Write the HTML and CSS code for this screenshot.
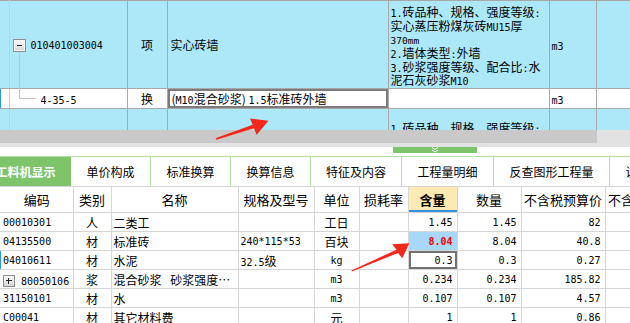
FILE: index.html
```html
<!DOCTYPE html>
<html lang="zh-CN">
<head>
    <meta charset="UTF-8">
    <title>分部分项 - 工料机显示</title>
    <link rel="stylesheet" href="styles.css">
</head>
<body>
<div class="main">
    <div class="top">
        <table class="bill">
            <colgroup>
                <col class="c-gut"><col class="c-code"><col class="c-type"><col class="c-name"><col class="c-feat"><col class="c-unit"><col class="c-last">
            </colgroup>
            <tr class="blue r1">
                <td class="gut"></td>
                <td class="code"><span class="fold"></span><span class="en">010401003004</span></td>
                <td class="mid">项</td>
                <td class="name">实心砖墙</td>
                <td class="feat">
                    <div><span class="en">1.</span>砖品种、规格、强度等级<span class="en">:</span></div>
                    <div>实心蒸压粉煤灰砖<span class="en">MU15</span>厚</div>
                    <div><span class="en sm">370mm</span></div>
                    <div><span class="en">2.</span>墙体类型<span class="en">:</span>外墙</div>
                    <div><span class="en">3.</span>砂浆强度等级、配合比<span class="en">:</span>水</div>
                    <div>泥石灰砂浆<span class="en">M10</span></div>
                </td>
                <td class="unit"><span class="en">m3</span></td>
                <td></td>
            </tr>
            <tr class="r2">
                <td class="gut mark"></td>
                <td class="code sub"><span class="en">4-35-5</span></td>
                <td class="mid">换</td>
                <td class="name edit">(<span class="en">M10</span>混合砂浆) <span class="en">1.5</span>标准砖外墙</td>
                <td></td>
                <td class="unit"><span class="en">m3</span></td>
                <td></td>
            </tr>
            <tr class="blue r3">
                <td class="gut"></td>
                <td></td>
                <td></td>
                <td></td>
                <td class="feat">
                    <div><span class="en">1.</span>砖品种、规格、强度等级<span class="en">:</span></div>
                </td>
                <td></td>
                <td></td>
            </tr>
        </table>
        <div class="tree-v"></div>
        <div class="tree-h"></div>
    </div>

    <div class="hscroll"><div class="thumb"></div></div>

    <div class="splitter">
        <div class="handle">
            <svg width="10" height="6" viewBox="0 0 10 6"><polyline points="2,0.5 5,2.5 8,0.5" fill="none" stroke="#fff" stroke-width="1"/><polyline points="2,3 5,5 8,3" fill="none" stroke="#fff" stroke-width="1"/></svg>
        </div>
    </div>

    <ul class="tabs">
        <li class="active" style="width: 90px">工料机显示</li>
        <li style="width: 80px">单价构成</li>
        <li style="width: 80px">标准换算</li>
        <li style="width: 80px">换算信息</li>
        <li style="width: 91px">特征及内容</li>
        <li style="width: 92px">工程量明细</li>
        <li style="width: 116px">反查图形工程量</li>
        <li style="width: 80px">说明信息</li>
    </ul>

    <table class="res">
        <colgroup>
            <col style="width: 73px"><col style="width: 38px"><col style="width: 127px"><col style="width: 76px"><col style="width: 45px"><col style="width: 49px"><col style="width: 49px"><col style="width: 64px"><col style="width: 84px"><col style="width: 84px">
        </colgroup>
        <tr class="head">
            <th>编码</th>
            <th>类别</th>
            <th>名称</th>
            <th>规格及型号</th>
            <th>单位</th>
            <th>损耗率</th>
            <th class="cur">含量</th>
            <th>数量</th>
            <th>不含税预算价</th>
            <th>不含税市场价</th>
        </tr>
        <tr>
            <td class="en">00010301</td>
            <td class="mid">人</td>
            <td>二类工</td>
            <td></td>
            <td class="mid">工日</td>
            <td></td>
            <td class="num">1.45</td>
            <td class="num">1.45</td>
            <td class="num">82</td>
            <td></td>
        </tr>
        <tr>
            <td class="en">04135500</td>
            <td class="mid">材</td>
            <td>标准砖</td>
            <td class="en">240*115*53</td>
            <td class="mid">百块</td>
            <td></td>
            <td class="num hot">8.04</td>
            <td class="num">8.04</td>
            <td class="num">40.8</td>
            <td></td>
        </tr>
        <tr>
            <td class="en mark">04010611</td>
            <td class="mid">材</td>
            <td>水泥</td>
            <td><span class="en">32.5</span>级</td>
            <td class="mid en">kg</td>
            <td></td>
            <td class="num sel">0.3</td>
            <td class="num">0.3</td>
            <td class="num">0.27</td>
            <td></td>
        </tr>
        <tr>
            <td><span class="plus"></span><span class="en">80050106</span></td>
            <td class="mid">浆</td>
            <td>混合砂浆&ensp;&nbsp;砂浆强度…</td>
            <td></td>
            <td class="mid en">m3</td>
            <td></td>
            <td class="num">0.234</td>
            <td class="num">0.234</td>
            <td class="num">185.82</td>
            <td></td>
        </tr>
        <tr>
            <td class="en">31150101</td>
            <td class="mid">材</td>
            <td>水</td>
            <td></td>
            <td class="mid en">m3</td>
            <td></td>
            <td class="num">0.107</td>
            <td class="num">0.107</td>
            <td class="num">4.57</td>
            <td></td>
        </tr>
        <tr>
            <td class="en">C00041</td>
            <td class="mid">材</td>
            <td>其它材料费</td>
            <td></td>
            <td class="mid">元</td>
            <td></td>
            <td class="num">1</td>
            <td class="num">1</td>
            <td class="num">0.86</td>
            <td></td>
        </tr>
    </table>

    <svg class="marks" width="630" height="323" viewBox="0 0 630 323">
        <polygon points="216.5,139.7 253.9,128.2 256.7,134.8 268.5,120.8 250,118.5 252.7,124.8 215.5,138.3" fill="#f3281c"/>
        <polygon points="352,271.5 398.1,252.9 402.3,258.3 409.3,243.3 392.3,244.3 396.5,249.7 351.4,270.5" fill="#f3281c"/>
    </svg>
</div>
</body>
</html>
```

FILE: styles.css
```css
* {
    margin: 0;
    padding: 0;
    box-sizing: border-box;
}

body {
    width: 630px;
    height: 323px;
    overflow: hidden;
    background: #fff;
    font-family: "Noto Sans CJK SC", sans-serif;
    font-size: 12px;
    color: #000;
}

.main {
    position: relative;
    height: 323px;
    overflow: hidden;
}

.en {
    font-family: "DejaVu Sans Mono", monospace;
    font-size: 10px;
    line-height: 1;
}

.sm {
    font-size: 9.5px;
}

/* 清单表 */
.top {
    position: relative;
    height: 130px;
    overflow: hidden;
}

.bill {
    border-collapse: collapse;
    table-layout: fixed;
    width: 656px;
    border-top: 1px solid #a8a8a8;
}

.c-gut { width: 9px; }
.c-code { width: 118px; }
.c-type { width: 40px; }
.c-name { width: 221px; }
.c-feat { width: 161px; }
.c-unit { width: 47px; }
.c-last { width: 60px; }

.bill td {
    border: 1px solid #a8a8a8;
    padding: 0 2px;
    line-height: 14px;
    white-space: nowrap;
    overflow: hidden;
    vertical-align: middle;
}

.bill td.gut {
    border-left: 0;
    border-right-color: #cdcdcd;
    padding: 0;
}

.bill td.mark,
.res td.mark {
    box-shadow: inset 1px 0 0 #2a9ad8;
}

.blue td {
    background: #ade8f8;
}

.r1 td {
    height: 88px;
}

.r2 td {
    height: 20px;
}

.r3 td {
    height: 30px;
    vertical-align: top;
}

.bill .code {
    padding-left: 3px;
}

.bill .code.sub {
    padding-left: 31px;
}

.bill .mid {
    text-align: center;
}

.bill .name {
    padding-left: 3px;
}

.bill .feat {
    vertical-align: top;
    padding-top: 4px;
}

.feat div {
    height: 13.7px;
    line-height: 13.7px;
    overflow: visible;
}

.r3 .feat {
    padding-top: 12px;
}

.bill .edit {
    box-shadow: inset 0 0 0 2px #7c7c7c;
    padding-left: 4px;
}

.fold {
    display: inline-block;
    position: relative;
    width: 13px;
    height: 13px;
    margin-right: 5px;
    vertical-align: -3px;
    border: 1px solid #8f8f8f;
    background: linear-gradient(#fafafa, #d6d6d6);
    box-shadow: inset 0 0 0 1px #f4f4f4;
}

.fold::before {
    content: "";
    position: absolute;
    left: 3px;
    right: 3px;
    top: 5px;
    height: 1px;
    background: #222;
}

.tree-v {
    position: absolute;
    left: 19px;
    top: 52px;
    width: 1px;
    height: 47px;
    background: #c3c3c3;
}

.tree-h {
    position: absolute;
    left: 19px;
    top: 98px;
    width: 17px;
    height: 1px;
    background: #c3c3c3;
}

/* 滚动条 */
.hscroll {
    height: 17px;
    background: #e2e2e2;
}

.thumb {
    width: 597px;
    height: 13px;
    background: #c9c9c9;
}

.splitter {
    height: 9px;
    padding-left: 393px;
}

.handle {
    width: 84px;
    height: 6px;
    background: #7dc46b;
    display: flex;
    justify-content: center;
}

/* 页签 */
.tabs {
    display: flex;
    height: 30px;
    border-top: 1px solid #b4dfa5;
    list-style: none;
    white-space: nowrap;
}

.tabs li {
    flex: none;
    height: 29px;
    line-height: 29px;
    text-align: center;
    border-right: 1px solid #b4dfa5;
    overflow: hidden;
}

.tabs li.active {
    margin-left: -19px;
    background: #7dc46b;
    color: #fff;
    font-weight: bold;
    border-right-color: #7dc46b;
}

/* 工料机表 */
.res {
    border-collapse: collapse;
    table-layout: fixed;
    width: 665px;
    border-top: 1px solid #d6d6d6;
}

.res th,
.res td {
    border: 1px solid #d6d6d6;
    padding: 0 2px;
    white-space: nowrap;
    overflow: hidden;
    vertical-align: middle;
    text-align: left;
}

.res tr > :first-child {
    border-left: 0;
    padding-left: 3px;
}

.res th {
    height: 26px;
    font-size: 13px;
    font-weight: normal;
    text-align: center;
}

.res th.cur {
    background: #fde9b2;
    font-weight: bold;
    box-shadow: inset 0 -2px 0 #3a8fdc;
}

.res td {
    height: 19px;
    line-height: 17px;
}

.res td.mid {
    text-align: center;
}

.res td.num {
    text-align: right;
    padding-right: 4px;
    font-family: "DejaVu Sans Mono", monospace;
    font-size: 10px;
}

.res td.hot {
    background: #a7d8f7;
    color: #f00;
    font-weight: bold;
}

.res td.sel {
    box-shadow: inset 0 0 0 2px #727272;
}

.plus {
    display: inline-block;
    position: relative;
    width: 12px;
    height: 12px;
    margin-right: 6px;
    vertical-align: -2px;
    border: 1px solid #8f8f8f;
    background: linear-gradient(#fafafa, #d6d6d6);
}

.plus::before,
.plus::after {
    content: "";
    position: absolute;
    background: #222;
}

.plus::before {
    left: 2px;
    right: 2px;
    top: 4px;
    height: 1px;
}

.plus::after {
    top: 2px;
    bottom: 2px;
    left: 4px;
    width: 1px;
}

.marks {
    position: absolute;
    left: 0;
    top: 0;
    pointer-events: none;
}
```
